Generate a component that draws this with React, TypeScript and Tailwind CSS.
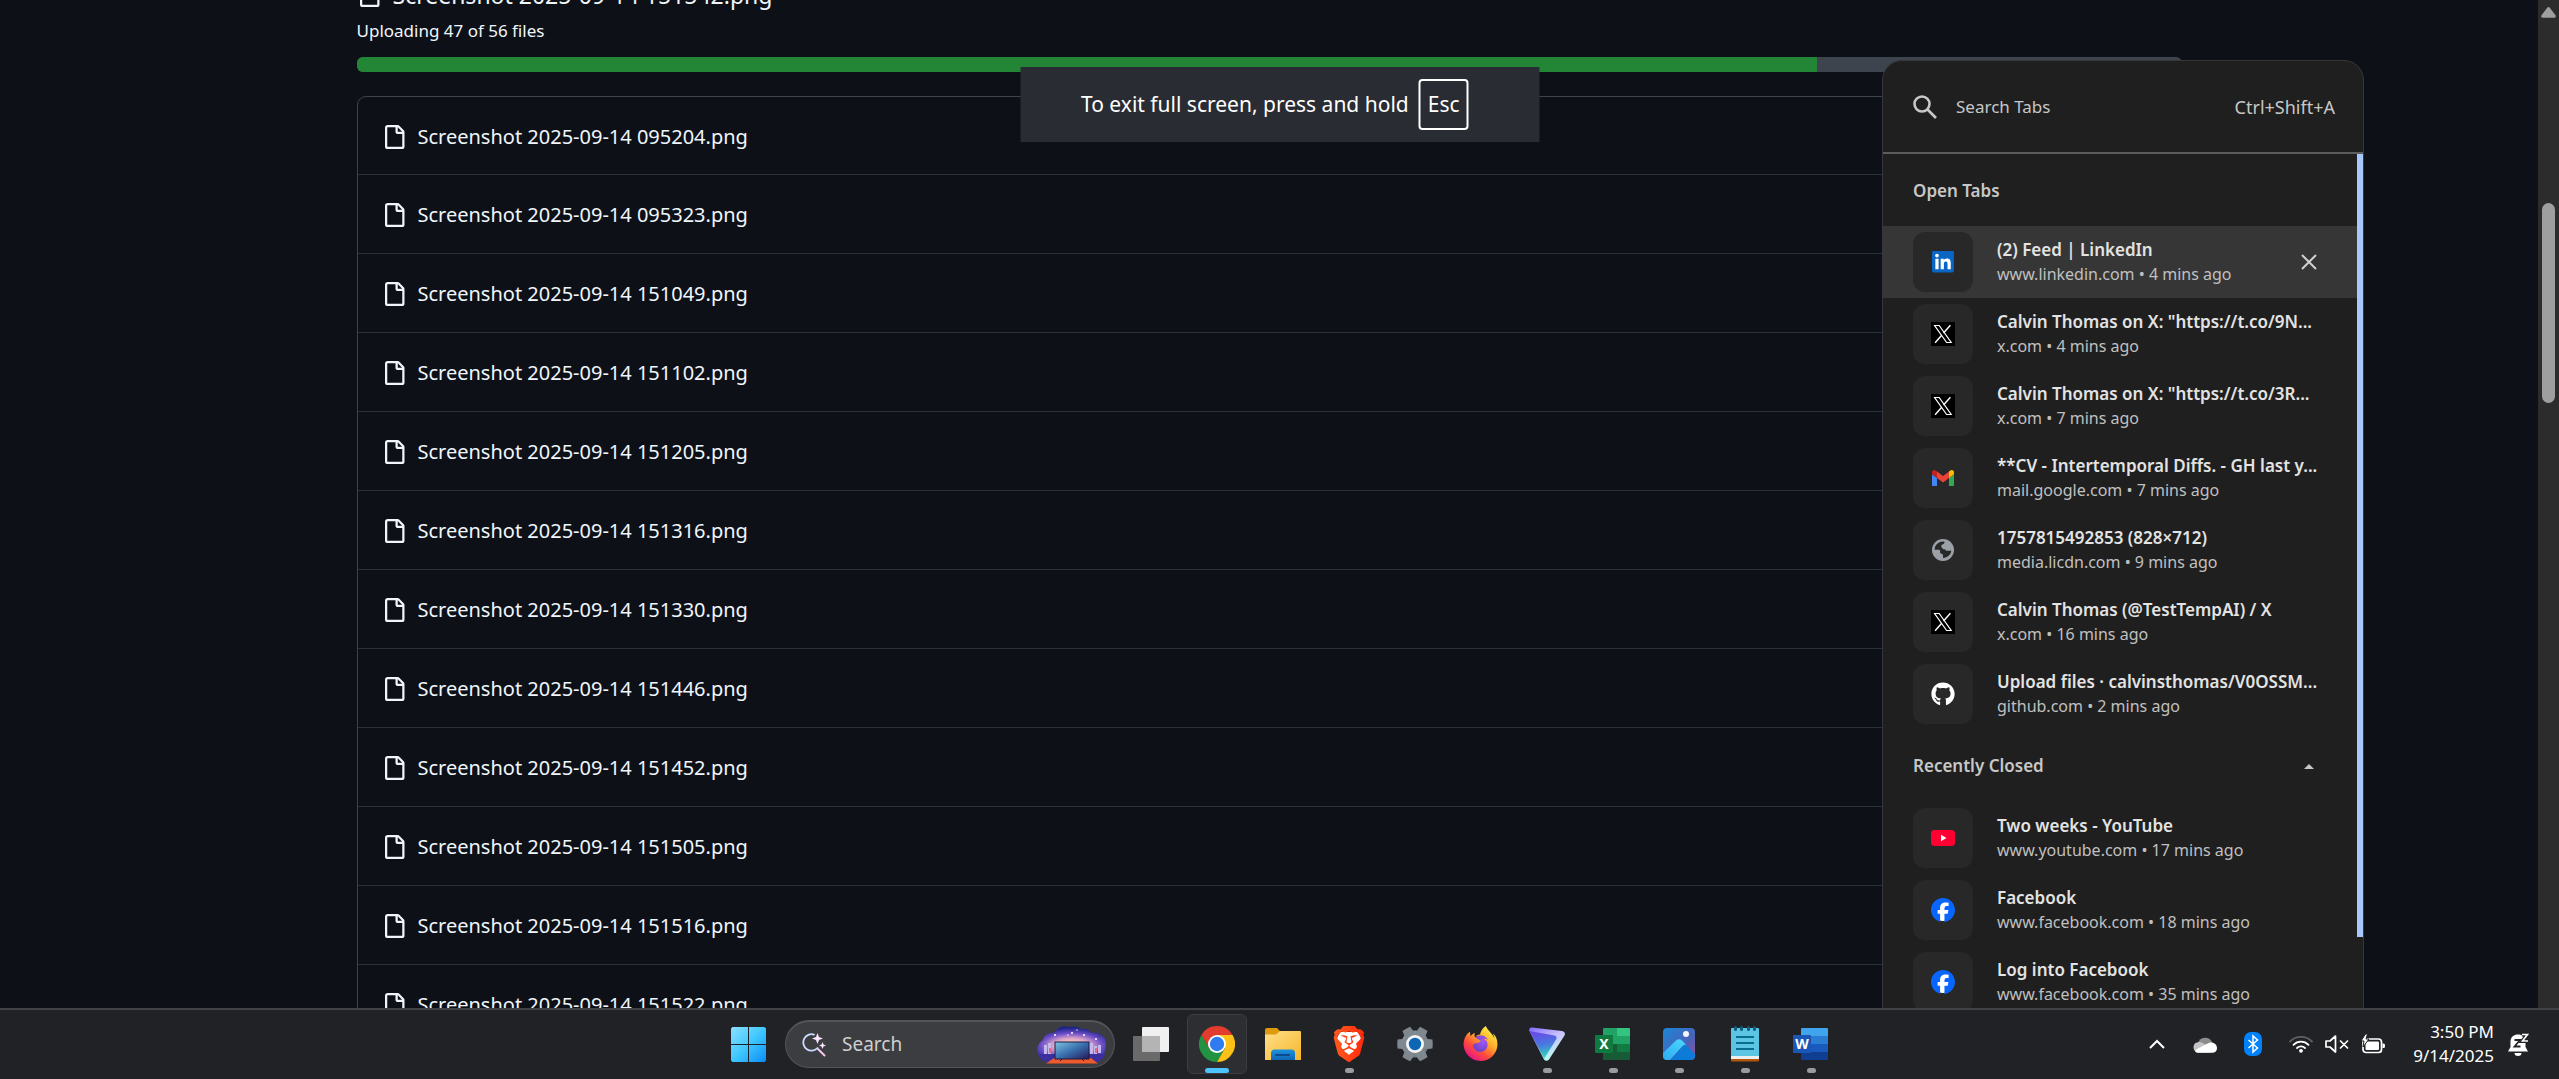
import React from "react";
import { FaGithub, FaLinkedin } from "react-icons/fa";
import { SiBrave, SiFacebook, SiFirefoxbrowser } from "react-icons/si";

const FILES = [
  "095204", "095323", "151049", "151102", "151205", "151316",
  "151330", "151446", "151452", "151505", "151516", "151522",
].map((time) => `Screenshot 2025-09-14 ${time}.png`);

type Tab = { title: string; host: string; ago: string; icon: React.ReactNode; active?: boolean };

function FileIcon() {
  return (
    <svg viewBox="0 0 16 16" className="size-6 shrink-0 fill-[#f0f6fc]" aria-hidden="true">
      <path d="M2 1.75C2 .784 2.784 0 3.75 0h6.586c.464 0 .909.184 1.237.513l2.914 2.914c.329.328.513.773.513 1.237v9.586A1.75 1.75 0 0 1 13.25 16h-9.5A1.75 1.75 0 0 1 2 14.25Zm1.75-.25a.25.25 0 0 0-.25.25v12.5c0 .138.112.25.25.25h9.5a.25.25 0 0 0 .25-.25V6h-2.75A1.75 1.75 0 0 1 9 4.25V1.5Zm6.75.062V4.25c0 .138.112.25.25.25h2.688l-.011-.013-2.914-2.914-.013-.011Z" />
    </svg>
  );
}

function LinkedInIcon() {
  return (
    <svg viewBox="0 0 22 22" className="size-[22px]" aria-hidden="true">
      <rect x="2" y="2" width="18" height="18" fill="#fff" />
      <FaLinkedin x={0} y={-2} size={25} color="#0a66c2" preserveAspectRatio="xMinYMid" />
    </svg>
  );
}

function XIcon() {
  return (
    <svg viewBox="0 0 24 24" className="size-6" aria-hidden="true">
      <rect width="24" height="24" fill="#000" />
      <path d="M3.6 3.5h4.6l12 17h-4.6z" fill="none" stroke="#fff" strokeWidth="1.2" />
      <path d="M19.4 3.3l-6.9 7.7M10.7 13.2l-6.6 7.5" stroke="#fff" strokeWidth="1.4" />
    </svg>
  );
}

function GmailIcon() {
  return (
    <svg viewBox="52 42 88 66" className="w-[22px]" aria-hidden="true">
      <path fill="#4285f4" d="M58 108h14V74L52 59v43c0 3.32 2.69 6 6 6" />
      <path fill="#34a853" d="M120 108h14c3.32 0 6-2.69 6-6V59l-20 15" />
      <path fill="#fbbc04" d="M120 48v26l20-15v-8c0-7.42-8.47-11.65-14.4-7.2" />
      <path fill="#ea4335" d="M72 74V48l24 18 24-18v26L96 92" />
      <path fill="#c5221f" d="M52 51v8l20 15V48l-5.6-4.2c-5.94-4.45-14.4-.22-14.4 7.2" />
    </svg>
  );
}

function GlobeIcon() {
  return (
    <svg viewBox="0 0 22 22" className="size-[22px]" aria-hidden="true">
      <circle cx="11" cy="11" r="11" fill="#9aa0a6" />
      <path
        fill="#282828"
        d="M12.4 2.6c.3 1.500-.4 2.700-1.900 2.900-1 .1-1.300.6-1.200 1.500.1.800.500 1.200 1.500 1.300 1.900.1 2.500.8 2.600 2.200.1.900.6 1.200 1.600 1.200h4.300c-.2 2-1.300 4-3 5.400-1.600 1.300-3.400 1.900-5.300 1.900v-2.600c0-1.100-.4-1.500-1.500-1.700-1.200-.2-1.500-.9-1.400-2.300.1-1.300-.5-1.700-1.600-1.700H2.700C2.500 7 5.700 2.600 11 2.500z"
      />
      <path fill="#9aa0a6" d="M11 5.400l3 1.600.4 3.500-3-.3-2-2z" />
    </svg>
  );
}

function YouTubeIcon() {
  return (
    <svg viewBox="0 0 24 16" className="w-6" aria-hidden="true">
      <rect width="24" height="16" rx="3.500" fill="#ff0033" />
      <path d="M10 4.800v6.400l5.400-3.200z" fill="#fff" />
    </svg>
  );
}

function FacebookIcon() {
  return (
    <svg viewBox="0 0 24 24" className="size-6" aria-hidden="true">
      <circle cx="12" cy="12" r="11" fill="#fff" />
      <SiFacebook size={24} color="#0866ff" />
    </svg>
  );
}

const OPEN_TABS: Tab[] = [
  { title: "(2) Feed | LinkedIn", host: "www.linkedin.com", ago: "4 mins ago", icon: <LinkedInIcon />, active: true },
  { title: 'Calvin Thomas on X: "https://t.co/9N...', host: "x.com", ago: "4 mins ago", icon: <XIcon /> },
  { title: 'Calvin Thomas on X: "https://t.co/3R...', host: "x.com", ago: "7 mins ago", icon: <XIcon /> },
  { title: "**CV - Intertemporal Diffs. - GH last y...", host: "mail.google.com", ago: "7 mins ago", icon: <GmailIcon /> },
  { title: "1757815492853 (828×712)", host: "media.licdn.com", ago: "9 mins ago", icon: <GlobeIcon /> },
  { title: "Calvin Thomas (@TestTempAI) / X", host: "x.com", ago: "16 mins ago", icon: <XIcon /> },
  { title: "Upload files · calvinsthomas/V0OSSM...", host: "github.com", ago: "2 mins ago", icon: <FaGithub className="size-6 text-white" /> },
];

const CLOSED_TABS: Tab[] = [
  { title: "Two weeks - YouTube", host: "www.youtube.com", ago: "17 mins ago", icon: <YouTubeIcon /> },
  { title: "Facebook", host: "www.facebook.com", ago: "18 mins ago", icon: <FacebookIcon /> },
  { title: "Log into Facebook", host: "www.facebook.com", ago: "35 mins ago", icon: <FacebookIcon /> },
];

function TabRow({ tab }: { tab: Tab }) {
  return (
    <li className={`flex h-[72px] items-center gap-6 pr-10 pl-[30px] ${tab.active ? "bg-[#363636]" : ""}`}>
      <span className="flex size-[60px] shrink-0 items-center justify-center rounded-xl bg-[#282828]">{tab.icon}</span>
      <div className="flex-1 whitespace-nowrap">
        <p className="text-[17px] leading-6 font-semibold text-[#e3e3e3]">{tab.title}</p>
        <p className="text-base leading-6 text-[#c0c0c0]">{tab.host} • {tab.ago}</p>
      </div>
      {tab.active && (
        <button aria-label="Close tab">
          <svg viewBox="0 0 16 16" className="size-4 stroke-[#d0d0d0]" strokeWidth="2">
            <path d="M1 1l14 14M15 1L1 15" />
          </svg>
        </button>
      )}
    </li>
  );
}

function TabSearch() {
  return (
    <aside className="absolute top-15 right-[195px] w-[482px] overflow-hidden rounded-t-[20px] border border-[#35373a] bg-[#1f1f1f]">
      <div className="flex h-[93px] items-center border-b-2 border-[#5c5c5c] pr-7 pl-[30px]">
        <svg viewBox="0 0 24 24" className="size-6 fill-none stroke-[#c7c7c7]" strokeWidth="2.600" aria-hidden="true">
          <circle cx="9" cy="9" r="7.500" />
          <path d="M14.500 14.500l8.500 8.500" />
        </svg>
        <input
          aria-label="Search Tabs"
          placeholder="Search Tabs"
          className="ml-[19px] min-w-0 flex-1 bg-transparent text-[17px] text-[#c7c7c7] outline-none placeholder:text-[#c7c7c7]"
        />
        <span className="text-lg text-[#c7c7c7]">Ctrl+Shift+A</span>
      </div>
      <div className="flex items-start">
        <div className="flex-1">
          <h2 className="flex h-[72px] items-center pt-0.5 pl-[30px] text-[17px] font-semibold text-[#c7c7c7]">Open Tabs</h2>
          <ul>{OPEN_TABS.map((tab) => <TabRow key={tab.title} tab={tab} />)}</ul>
          <div className="flex h-[72px] items-center justify-between pr-[43px] pl-[30px]">
            <h2 className="text-[17px] font-semibold text-[#c7c7c7]">Recently Closed</h2>
            <button aria-label="Collapse recently closed tabs">
              <svg viewBox="0 0 10 5" className="w-2.5 fill-[#c7c7c7]"><path d="M0 5l5-5 5 5z" /></svg>
            </button>
          </div>
          <ul>{CLOSED_TABS.map((tab) => <TabRow key={tab.title} tab={tab} />)}</ul>
        </div>
        <div className="h-[783px] w-1.5 bg-[#a8c7fa]" />
      </div>
    </aside>
  );
}

function StartIcon() {
  return (
    <svg viewBox="0 0 35 35" className="size-[35px]" aria-hidden="true">
      <defs>
        <linearGradient id="win" x1="0" y1="0" x2="35" y2="35" gradientUnits="userSpaceOnUse">
          <stop offset="0" stopColor="#8be0ff" /><stop offset=".5" stopColor="#3fc8ff" /><stop offset="1" stopColor="#0a8cf5" />
        </linearGradient>
      </defs>
      <path fill="url(#win)" d="M1.500 0H17v17H0V1.500zM18 0h15.500L35 1.500V17H18zM0 18h17v17H1.500L0 33.500zM18 18h17v15.500L33.500 35H18z" />
    </svg>
  );
}

function SearchSparkIcon() {
  return (
    <svg viewBox="0 0 24 24" className="size-6 fill-none" aria-hidden="true">
      <path d="M12 1.600A8.200 8.200 0 1 0 15.500 15" stroke="#c9dcff" strokeWidth="1.800" strokeLinecap="round" />
      <path d="M16 16l6.500 6.500" stroke="#f0c8f0" strokeWidth="2" strokeLinecap="round" />
      <path d="M15.500 0l1.500 4 4 1.500-4 1.500-1.500 4-1.500-4-4-1.500 4-1.500zM20.500 9l1 2.500 2.500 1-2.500 1-1 2.500-1-2.500-2.500-1 2.500-1z" fill="#f8e4ff" />
    </svg>
  );
}

function TelevisionArt() {
  return (
    <svg viewBox="0 0 69 38" className="h-[38px] w-[69px]" aria-hidden="true">
      <defs>
        <radialGradient id="sky" cx="50%" cy="70%" r="65%">
          <stop offset="0" stopColor="#ffe2a8" /><stop offset=".4" stopColor="#e0a8c8" /><stop offset=".7" stopColor="#6a4cc8" /><stop offset="1" stopColor="#1c2385" />
        </radialGradient>
        <linearGradient id="tv" x1="0" y1="0" x2="1" y2="1">
          <stop offset="0" stopColor="#7cc4e2" /><stop offset=".5" stopColor="#3a6fae" /><stop offset="1" stopColor="#251a58" />
        </linearGradient>
      </defs>
      <path fill="url(#sky)" d="M1 28c-2-6 1-12 5-14 1-5 6-8 11-7 3-5 9-8 15-6 4-1 9-1 12 2 5-1 9 1 10 4 6-2 12 2 14 6 2 6 0 11-1 15z" />
      <path fill="#3a2f9c" d="M1 28h67c-1 4-4 7-8 8H10c-5-1-8-4-9-8z" />
      <path fill="#ee5a2c" d="M17 32h37l7 5.500H9z" />
      <path fill="#c6b8ec" d="M7 19h3v9H7zM11 17h3v11h-3zM53 17h3v11h-3zM57 20h3v8h-3zM61 19h3v8h-3z" />
      <path fill="#e26a8a" d="M12 22h2v5h-2zM58 22h2v5h-2z" />
      <rect x="18" y="16" width="34" height="17" fill="url(#tv)" stroke="#1b1b44" strokeWidth="1" />
      <path d="M25 33l-2 2M45 33l2 2" stroke="#1b1b44" />
      <g fill="#fff"><circle cx="18" cy="9" r="1" /><circle cx="31" cy="9" r=".7" /><circle cx="35" cy="7" r="1" /><circle cx="40" cy="4" r=".7" /><circle cx="47" cy="9" r="1" /><circle cx="59" cy="13" r="1" /></g>
    </svg>
  );
}

function TaskViewIcon() {
  return (
    <svg viewBox="0 0 36 36" className="size-9" aria-hidden="true">
      <rect x="9" y="1" width="27" height="25" rx="1" fill="#f0f0f0" />
      <rect x="0" y="10" width="27" height="25" rx="1" fill="#6a6a6a" />
      <path d="M9 10h18v16H9z" fill="#b4b4b4" />
    </svg>
  );
}

function ChromeIcon() {
  return (
    <svg viewBox="0 0 36 36" className="size-9" aria-hidden="true">
      <path fill="#e33b2e" d="M2.410 9A18 18 0 0 1 33.590 9L18 9 10.200 22.500z" />
      <path fill="#229342" d="M2.410 9L10.200 22.500H25.800L18 36A18 18 0 0 1 2.410 9" />
      <path fill="#fbc116" d="M33.590 9H18L25.800 22.500 18 36A18 18 0 0 0 33.590 9" />
      <circle cx="18" cy="18" r="9" fill="#fff" />
      <circle cx="18" cy="18" r="7.200" fill="#2f7cf0" />
    </svg>
  );
}

function FolderIcon() {
  return (
    <svg viewBox="0 0 36 36" className="size-9" aria-hidden="true">
      <defs>
        <linearGradient id="folder" x1="0" y1="0" x2="1" y2="1"><stop offset="0" stopColor="#ffe08a" /><stop offset="1" stopColor="#f8b62a" /></linearGradient>
        <linearGradient id="tray" x1="0" y1="0" x2="0" y2="1"><stop offset="0" stopColor="#1e94dc" /><stop offset="1" stopColor="#0f65b4" /></linearGradient>
      </defs>
      <path fill="#dc9a0c" d="M0 4a2 2 0 0 1 2-2h10l3.500 3.500H34V12H0z" />
      <path fill="url(#folder)" d="M0 8.500h11l4-3.500h20a1 1 0 0 1 1 1v28H0z" />
      <path fill="url(#tray)" d="M6 34v-7a3.500 3.500 0 0 1 3.500-3.500h17A3.500 3.500 0 0 1 30 27v7z" />
      <rect x="10" y="28" width="15" height="2" rx="1" fill="#0b4a8c" />
    </svg>
  );
}

function BraveIcon() {
  return (
    <svg viewBox="0 0 36 36" className="size-9" aria-hidden="true">
      <defs>
        <linearGradient id="brave" x1="0" y1="0" x2="1" y2="0"><stop offset="0" stopColor="#ff5a1f" /><stop offset="1" stopColor="#ff2a0a" /></linearGradient>
      </defs>
      <path fill="#fff" d="M9 6h18l3 6-4 16-8 5-8-5-4-16z" />
      <SiBrave size={36} fill="url(#brave)" />
    </svg>
  );
}

function SettingsIcon() {
  return (
    <svg viewBox="0 0 36 36" className="size-9" aria-hidden="true">
      <defs>
        <linearGradient id="gear" x1="0" y1="0" x2="36" y2="36" gradientUnits="userSpaceOnUse">
          <stop offset="0" stopColor="#98a0a7" /><stop offset="1" stopColor="#646d76" />
        </linearGradient>
      </defs>
      <circle cx="18" cy="18" r="13.500" fill="url(#gear)" />
      <g fill="#7f888f">
        <path d="M5 13l-4.500.6Q0 18 .5 22.400L5 23h26l4.500-.6Q36 18 35.500 13.600L31 13z" />
        <path d="M5 13l-4.500.6Q0 18 .5 22.400L5 23h26l4.500-.6Q36 18 35.500 13.600L31 13z" transform="rotate(60 18 18)" />
        <path d="M5 13l-4.500.6Q0 18 .5 22.400L5 23h26l4.500-.6Q36 18 35.500 13.600L31 13z" transform="rotate(120 18 18)" />
      </g>
      <circle cx="18" cy="18" r="9" fill="#f2f4f6" />
      <circle cx="18" cy="18" r="6.200" fill="#0d65b5" />
    </svg>
  );
}

function FirefoxIcon() {
  return (
    <svg viewBox="0 0 36 36" className="size-9" aria-hidden="true">
      <defs>
        <linearGradient id="fox" x1=".85" y1=".1" x2=".25" y2=".95"><stop offset="0" stopColor="#fff04a" /><stop offset=".4" stopColor="#ffa62a" /><stop offset=".7" stopColor="#ff4a3c" /><stop offset="1" stopColor="#e8148c" /></linearGradient>
        <radialGradient id="foxglobe" cx=".6" cy=".3" r=".8"><stop offset="0" stopColor="#a259f0" /><stop offset="1" stopColor="#5a38b8" /></radialGradient>
      </defs>
      <circle cx="18" cy="19" r="10" fill="url(#foxglobe)" />
      <SiFirefoxbrowser size={35} x={0} y={0} fill="url(#fox)" />
    </svg>
  );
}

function TriangleIcon() {
  return (
    <svg viewBox="0 0 36 36" className="size-9" aria-hidden="true">
      <defs>
        <linearGradient id="tri" x1="0" y1="0" x2=".6" y2="1"><stop offset="0" stopColor="#7d6bff" /><stop offset=".5" stopColor="#c9c0ff" /><stop offset="1" stopColor="#b8fff0" /></linearGradient>
        <linearGradient id="triin" x1=".4" y1="0" x2=".6" y2="1"><stop offset="0" stopColor="#6a48e8" /><stop offset=".5" stopColor="#4a78e0" /><stop offset="1" stopColor="#2fe0b8" /></linearGradient>
      </defs>
      <path fill="url(#tri)" d="M3 1.500l30 3.500a3 3 0 0 1 2.500 4.500L20 33.500a3 3 0 0 1-5 0L.4 5A2.500 2.500 0 0 1 3 1.500z" />
      <path fill="url(#triin)" d="M.3 4.500L3 5.500l22.500 4a2.500 2.500 0 0 1 1.600 4L16.500 30.500l-1.500 2z" />
    </svg>
  );
}

function ExcelIcon() {
  return (
    <svg viewBox="0 0 36 36" className="size-9" aria-hidden="true">
      <path fill="#21a366" d="M9 2h13v24H8V3a1 1 0 0 1 1-1z" /><path fill="#33c481" d="M22 2h12a1 1 0 0 1 1 1v7H22z" />
      <path fill="#107c41" d="M9 18h26v8H9z" /><path fill="#21a366" d="M22 10h13v8H22z" />
      <path fill="#185c37" d="M8 18h14v8h13v7a1 1 0 0 1-1 1H9a1 1 0 0 1-1-1z" />
      <rect y="9" width="18" height="18" rx="1" fill="#0f7a40" />
      <text x="9" y="23" textAnchor="middle" className="font-['Noto_Sans',sans-serif] text-[14px] font-bold" fill="#fff">X</text>
    </svg>
  );
}

function PhotosIcon() {
  return (
    <svg viewBox="0 0 36 36" className="size-9" aria-hidden="true">
      <defs>
        <linearGradient id="photo" x1="0" y1="0" x2="1" y2="1"><stop offset="0" stopColor="#1b86d8" /><stop offset=".6" stopColor="#4a62b8" /><stop offset="1" stopColor="#9a4f9e" /></linearGradient>
        <linearGradient id="hill" x1="1" y1="0" x2="0" y2="1"><stop offset="0" stopColor="#4ad8ff" /><stop offset="1" stopColor="#2aa8ee" /></linearGradient>
        <clipPath id="photoclip"><rect x="2" y="2" width="32" height="32" rx="4" /></clipPath>
      </defs>
      <g clipPath="url(#photoclip)">
        <rect x="2" y="2" width="32" height="32" fill="url(#photo)" />
        <path fill="#0c7cd8" d="M8 36l14-16q2-2 4 0l10 10v6z" />
        <path fill="url(#hill)" d="M0 29L15 14.500q3-2.500 6 0l4 4q-2 0-3.500 1.500L7 36H0z" />
        <circle cx="25" cy="8" r="3" fill="#f4f6fa" />
      </g>
    </svg>
  );
}

function NotepadIcon() {
  return (
    <svg viewBox="0 0 36 36" className="size-9" aria-hidden="true">
      <path fill="#b4560e" d="M4 30h28v4.500a1 1 0 0 1-1 1H5a1 1 0 0 1-1-1z" />
      <path fill="#eceff1" d="M4 28h28v5H4z" />
      <path fill="#5cc5e4" d="M5 2h26a1 1 0 0 1 1 1v27H4V3a1 1 0 0 1 1-1z" />
      <g fill="#0f5f80"><rect x="7" y="0" width="3" height="5" rx="1.500" /><rect x="13" y="0" width="3" height="5" rx="1.500" /><rect x="20" y="0" width="3" height="5" rx="1.500" /><rect x="26" y="0" width="3" height="5" rx="1.500" /></g>
      <path stroke="#0a6c92" strokeWidth="2" d="M9 11h18M9 17h18M9 23h18" />
    </svg>
  );
}

function WordIcon() {
  return (
    <svg viewBox="0 0 36 36" className="size-9" aria-hidden="true">
      <path fill="#41a5ee" d="M9 2h25a1 1 0 0 1 1 1v7H8V3a1 1 0 0 1 1-1z" />
      <path fill="#2b7cd3" d="M8 10h27v8H8z" /><path fill="#185abd" d="M8 18h27v8H8z" />
      <path fill="#103f91" d="M8 26h27v7a1 1 0 0 1-1 1H9a1 1 0 0 1-1-1z" />
      <rect y="9" width="18" height="18" rx="1" fill="#1a56b8" />
      <text x="9" y="23" textAnchor="middle" className="font-['Noto_Sans',sans-serif] text-[14px] font-bold" fill="#fff">W</text>
    </svg>
  );
}

type TaskApp = { name: string; icon: React.ReactNode; state?: "active" | "running" };

const APPS: TaskApp[] = [
  { name: "Task view", icon: <TaskViewIcon /> },
  { name: "Google Chrome", icon: <ChromeIcon />, state: "active" },
  { name: "File Explorer", icon: <FolderIcon /> },
  { name: "Brave", icon: <BraveIcon />, state: "running" },
  { name: "Settings", icon: <SettingsIcon /> },
  { name: "Firefox", icon: <FirefoxIcon /> },
  { name: "Proton VPN", icon: <TriangleIcon />, state: "running" },
  { name: "Excel", icon: <ExcelIcon />, state: "running" },
  { name: "Photos", icon: <PhotosIcon />, state: "running" },
  { name: "Notepad", icon: <NotepadIcon />, state: "running" },
  { name: "Word", icon: <WordIcon />, state: "running" },
];

function TaskButton({ app }: { app: TaskApp }) {
  const active = app.state === "active";
  return (
    <button
      aria-label={app.name}
      className={`relative mx-[3px] flex size-15 items-center justify-center rounded-md ${active ? "border border-[#3c3d40] bg-[#2d2e31]" : ""}`}
    >
      {app.icon}
      {active && <span className="absolute bottom-0 h-[5px] w-6 rounded-full bg-[#4cc2ff]" />}
      {app.state === "running" && <span className="absolute bottom-px h-[5px] w-[9px] rounded-full bg-[#9a9b9d]" />}
    </button>
  );
}

function Tray() {
  return (
    <div className="flex items-center justify-end pr-[29px]">
      <button aria-label="Show hidden icons" className="mr-7">
        <svg viewBox="0 0 16 10" className="w-4 fill-none stroke-white" strokeWidth="2"><path d="M1 9l7-7 7 7" /></svg>
      </button>
      <button aria-label="OneDrive" className="mr-[27px]">
        <svg viewBox="0 0 24 17" className="w-6">
          <path fill="#8c8c8c" d="M5 7a7.500 7.500 0 0 1 14-1l-3 6H6z" />
          <path fill="#c4c4c4" d="M5 16.500A5.200 5.200 0 0 1 5 6.200c3-.4 5 .8 7 2.300L20 13l-3 3.500z" />
          <path fill="#fff" d="M2 15c1-2 4-3 6-4 3-1.500 6-3.500 9-4.500 4-.5 7 2 7 5.500s-2.500 4.800-5 4.800H5c-1.500 0-2.500-.8-3-1.800z" />
        </svg>
      </button>
      <button aria-label="Bluetooth" className="mr-[27px]">
        <svg viewBox="0 0 18 24" className="w-[18px] fill-none">
          <rect width="18" height="24" rx="7" fill="#0082fc" />
          <path d="M4.500 8l9 8-4.500 4V4l4.500 4-9 8" stroke="#fff" strokeWidth="1.500" />
        </svg>
      </button>
      <button aria-label="Network, volume and battery" className="mr-7 flex items-center gap-3">
        <svg viewBox="0 0 24 18" className="w-6 fill-none" strokeWidth="1.800" strokeLinecap="round">
          <path d="M1 6.500a15.500 15.500 0 0 1 22 0" stroke="#5f6062" />
          <path d="M4.500 9.800a10.600 10.600 0 0 1 15 0M8 13a5.600 5.600 0 0 1 8 0" stroke="#fff" />
          <circle cx="12" cy="15.800" r="1.900" fill="#fff" />
        </svg>
        <svg viewBox="0 0 24 18" className="w-6 fill-none stroke-white" strokeWidth="1.700" strokeLinejoin="round">
          <path d="M1 6v6h4l5.500 5V1L5 6zM15 5.500l8 8M23 5.500l-8 8" />
        </svg>
        <svg viewBox="0 0 24 20" className="w-6">
          <rect x="2" y="5" width="18.500" height="13.500" rx="3" fill="none" stroke="#fff" strokeWidth="1.700" />
          <rect x="4.500" y="7.500" width="13.500" height="8.500" rx="1" fill="#fff" />
          <path fill="#fff" d="M21.500 9.500h1a1.500 1.500 0 0 1 1.500 1.500v1.500a1.500 1.500 0 0 1-1.500 1.500h-1z" />
          <path fill="#fff" stroke="#202225" strokeWidth="1" d="M4.500 0L0 7h3l-1 6 6-8H5l1.500-5z" />
        </svg>
      </button>
      <button className="mr-3.5 text-right text-[17px] leading-6 text-white">
        <time className="block">3:50 PM</time>
        <time className="block">9/14/2025</time>
      </button>
      <button aria-label="Notifications">
        <svg viewBox="0 0 22 24" className="w-[22px]">
          <path fill="#fff" d="M2.500 9.500C2.500 5 6 2.500 10 2.500s7.500 2.500 7.500 7V15l2.500 4.500H0L2.500 15z" />
          <path fill="#fff" d="M6.500 21h7a3.500 3 0 0 1-7 0z" />
          <path fill="none" stroke="#202225" strokeWidth="1.800" d="M6.500 8h5.500l-5.500 6.500h6" />
          <path fill="none" stroke="#202225" strokeWidth="4" d="M14 2.500h5.500L14.500 9H20" />
          <path fill="none" stroke="#fff" strokeWidth="1.600" d="M14 2.500h5.500L14.500 9H20" />
        </svg>
      </button>
    </div>
  );
}

function Taskbar() {
  return (
    <footer className="grid h-[71px] shrink-0 grid-cols-[1fr_auto_1fr] border-t-2 border-[#414243] bg-[#202225] pb-px">
      <div />
      <div className="flex items-center">
        <button aria-label="Start" className="flex h-15 w-[66px] items-center justify-center"><StartIcon /></button>
        <label className="mr-[3px] ml-1 flex h-12 w-[330px] items-center rounded-full border border-t-2 border-[#54555a] bg-[#3c3d40] pr-2 pl-4">
          <SearchSparkIcon />
          <input
            aria-label="Search"
            placeholder="Search"
            className="ml-4 min-w-0 flex-1 bg-transparent text-[19px] text-[#cfcfcf] outline-none placeholder:text-[#cfcfcf]"
          />
          <TelevisionArt />
        </label>
        {APPS.map((app) => <TaskButton key={app.name} app={app} />)}
      </div>
      <Tray />
    </footer>
  );
}

export default function App() {
  return (
    <div className="flex h-screen flex-col overflow-hidden bg-[#0d1117] font-['Noto_Sans',sans-serif] text-[#f0f6fc]">
      <div className="relative flex min-h-0 flex-1 overflow-hidden">
        <main className="flex-1 overflow-hidden">
          <div className="mx-auto -mt-[23px] max-w-[1825px]">
            <h1 className="flex h-9 items-center gap-3 text-[23px]">
              <FileIcon />
              Screenshot 2025-09-14 151542.png
            </h1>
            <p className="mt-1.5 text-[17px] leading-6">Uploading 47 of 56 files</p>
            <div
              role="progressbar"
              aria-label="Upload progress"
              aria-valuenow={80}
              className="mt-3.5 h-[15px] overflow-hidden rounded-md bg-[#3d444d]"
            >
              <div className="h-full w-4/5 bg-[#238636]" />
            </div>
            <ul className="mt-6 rounded-t-[9px] border border-[#3d444d]">
              {FILES.map((name) => (
                <li key={name} className="flex h-[79px] items-center gap-3 border-b border-[#2b3139] px-6 pt-0.5 text-xl first:h-[78px]">
                  <FileIcon />
                  {name}
                </li>
              ))}
            </ul>
          </div>
        </main>
        <div className="w-[21px] bg-[#2c2c2c] pt-[7px]">
          <svg viewBox="0 0 15 11" className="mx-auto w-[15px] fill-[#9f9f9f]" aria-hidden="true">
            <path d="M6.200.7q1.300-1.400 2.600 0l5.700 7.500q1 2.300-1 2.500h-12q-2-.2-1-2.500z" />
          </svg>
          <div className="mx-auto mt-[185px] h-[200px] w-[13px] rounded-full bg-[#9f9f9f]" />
        </div>
        <div className="absolute top-[67px] left-1/2 flex h-[75px] w-[519px] -translate-x-1/2 items-center gap-2.5 bg-[#2a2c34] pl-[61px] text-[21px] whitespace-nowrap text-white">
          To exit full screen, press and hold
          <kbd className="flex h-[51px] w-[50px] items-center justify-center rounded border-2 border-white font-[inherit]">Esc</kbd>
        </div>
        <TabSearch />
      </div>
      <Taskbar />
    </div>
  );
}
